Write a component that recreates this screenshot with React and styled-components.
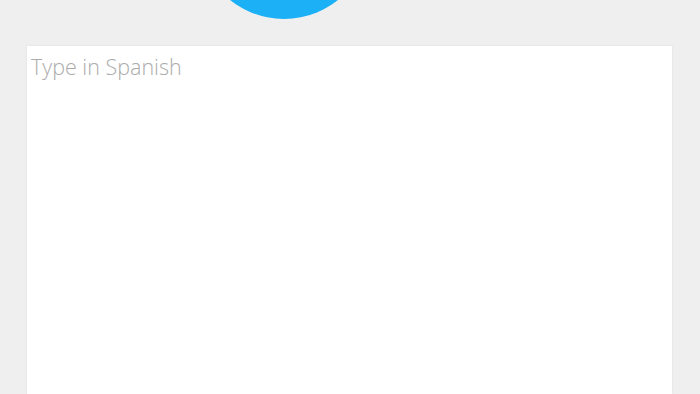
import React from "react";
import styled, { createGlobalStyle } from "styled-components";

const Global = createGlobalStyle`
  html, body { margin: 0; padding: 0; background: #efefef; height: 100%; overflow: hidden; }
  #root { height: 100%; }
`;

const Page = styled.div`
  display: flex;
  flex-direction: column;
  height: 394px;
  background: #efefef;
`;

const Header = styled.div`
  height: 46px;
  display: flex;
  align-items: flex-end;
  padding-left: 198px;
  overflow: visible;
`;

const Avatar = styled.div`
  width: 172px;
  height: 172px;
  border-radius: 50%;
  background: #1cb0f6;
  margin-bottom: 27px;
  flex: none;
`;

const Panel = styled.div`
  flex: 1;
  margin: 0 28px 0 27px;
  background: #ffffff;
  box-shadow: 0 0 2px rgba(0, 0, 0, 0.08);
  display: flex;
`;

const Input = styled.textarea`
  flex: 1;
  border: none;
  outline: none;
  resize: none;
  background: transparent;
  padding: 6px 4px;
  font-family: "Open Sans", Lato, sans-serif;
  font-weight: 300;
  font-size: 21.5px;
  line-height: 30px;
  color: #4b4b4b;
  &::placeholder { color: #ababab; }
`;

export default function App() {
  return (
    <Page>
      <Global />
      <Header>
        <Avatar />
      </Header>
      <Panel>
        <Input placeholder="Type in Spanish" />
      </Panel>
    </Page>
  );
}
